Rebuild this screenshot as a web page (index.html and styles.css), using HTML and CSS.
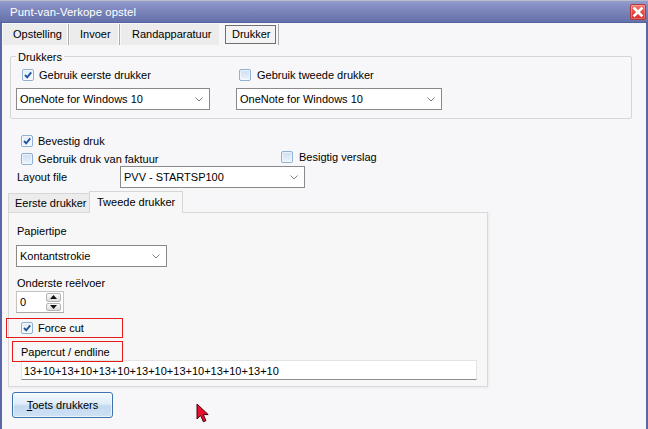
FILE: index.html
```html
<!DOCTYPE html>
<html>
<head>
<meta charset="utf-8">
<title>Punt-van-Verkope opstel</title>
<link rel="stylesheet" href="styles.css">
</head>
<body>
<div class="window">
  <div class="titlebar">
    <span class="title">Punt-van-Verkope opstel</span>
    <span class="close"><svg width="12" height="12" viewBox="0 0 12 12"><path d="M2.5 2.5 L9.5 9.5 M9.5 2.5 L2.5 9.5" stroke="#fff" stroke-width="2.6" stroke-linecap="square"/></svg></span>
  </div>
  <div class="frame">
    <div class="tabs">
      <div class="tab t1">Opstelling</div>
      <div class="tab t2">Invoer</div>
      <div class="tab t3">Randapparatuur</div>
      <div class="tab t4"><span class="focus">Drukker</span></div>
      <div class="tabsep"></div>
    </div>

    <div class="group">
      <span class="legend">Drukkers</span>
      <div class="group-cols">
        <div class="col col1">
          <div class="check c-first"><span class="box checked"><svg width="10" height="10" viewBox="0 0 10 10"><path d="M2 5 L4.2 7.4 L8.2 2.4" stroke="#23569e" stroke-width="1.9" fill="none"/></svg></span><span>Gebruik eerste drukker</span></div>
          <div class="select s-printer1"><span>OneNote for Windows 10</span><svg class="chev" width="8" height="5" viewBox="0 0 8 5"><path d="M0.5 0.5 L4 4 L7.5 0.5" stroke="#808080" fill="none"/></svg></div>
        </div>
        <div class="col col2">
          <div class="check c-second"><span class="box"></span><span>Gebruik tweede drukker</span></div>
          <div class="select s-printer2"><span>OneNote for Windows 10</span><svg class="chev" width="8" height="5" viewBox="0 0 8 5"><path d="M0.5 0.5 L4 4 L7.5 0.5" stroke="#808080" fill="none"/></svg></div>
        </div>
      </div>
    </div>

    <div class="check row-bevestig"><span class="box checked"><svg width="10" height="10" viewBox="0 0 10 10"><path d="M2 5 L4.2 7.4 L8.2 2.4" stroke="#23569e" stroke-width="1.9" fill="none"/></svg></span><span>Bevestig druk</span></div>

    <div class="row-two">
      <div class="check c-faktuur"><span class="box"></span><span>Gebruik druk van faktuur</span></div>
      <div class="check c-verslag"><span class="box"></span><span>Besigtig verslag</span></div>
    </div>

    <div class="row-layout">
      <span class="layout-label">Layout file</span>
      <div class="select s-layout"><span>PVV - STARTSP100</span><svg class="chev" width="8" height="5" viewBox="0 0 8 5"><path d="M0.5 0.5 L4 4 L7.5 0.5" stroke="#808080" fill="none"/></svg></div>
    </div>

    <div class="itabs">
      <div class="itab itab1">Eerste drukker</div>
      <div class="itab itab2">Tweede drukker</div>
    </div>
    <div class="panel">
      <div class="p-label first">Papiertipe</div>
      <div class="select s-paper"><span>Kontantstrokie</span><svg class="chev" width="8" height="5" viewBox="0 0 8 5"><path d="M0.5 0.5 L4 4 L7.5 0.5" stroke="#808080" fill="none"/></svg></div>
      <div class="p-label second">Onderste reëlvoer</div>
      <div class="spinner">
        <span class="spin-val">0</span>
        <span class="spin-btns">
          <span class="spin-btn"><svg width="7" height="4" viewBox="0 0 7 4"><path d="M0 4 L3.5 0 L7 4 Z" fill="#111"/></svg></span>
          <span class="spin-btn"><svg width="7" height="4" viewBox="0 0 7 4"><path d="M0 0 L3.5 4 L7 0 Z" fill="#111"/></svg></span>
        </span>
      </div>
      <div class="redbox red1"><div class="check"><span class="box checked"><svg width="10" height="10" viewBox="0 0 10 10"><path d="M2 5 L4.2 7.4 L8.2 2.4" stroke="#23569e" stroke-width="1.9" fill="none"/></svg></span><span>Force cut</span></div></div>
      <div class="redbox red2">Papercut / endline</div>
      <div class="input">13+10+13+10+13+10+13+10+13+10+13+10+13+10</div>
    </div>

    <div class="btn"><span><u>T</u>oets drukkers</span></div>
  </div>

  <svg class="cursor" width="15" height="20" viewBox="0 0 15 20"><path d="M1 1 L1 16 L4.6 12.6 L7.4 18.8 L10 17.6 L7.3 11.6 L12.2 11.6 Z" fill="#e8102a" stroke="#4a0010" stroke-width="1" stroke-linejoin="miter"/></svg>
</div>
</body>
</html>
```

FILE: styles.css
```css
* { box-sizing: border-box; margin: 0; padding: 0; }
body {
  margin: 0;
  font-family: "Liberation Sans", Arial, sans-serif;
  font-size: 11px;
  color: #000;
  background: #f7f7f9;
}
.window {
  width: 648px;
  height: 429px;
  overflow: hidden;
  position: relative;
  background: #f7f7f9;
}
.titlebar {
  height: 23px;
  display: flex;
  align-items: center;
  justify-content: space-between;
  padding: 0 2px 0 10px;
  border-top: 1px solid #b9bccb;
  border-bottom: 1px solid #56619f;
  background: linear-gradient(#959dcc 0%, #8790c4 20%, #7580b6 60%, #6670aa 100%);
}
.title {
  color: #fff;
  font-size: 11.3px;
  letter-spacing: 0.1px;
}
.close {
  width: 16px;
  height: 16px;
  margin-top: 1px;
  border: 1px solid #b33a3a;
  border-radius: 2px;
  background: linear-gradient(#f57b73 0%, #e84a44 50%, #d9302c 100%);
  box-shadow: inset 0 0 0 1px rgba(255,255,255,0.25);
  display: flex;
  align-items: center;
  justify-content: center;
}
.frame {
  height: 406px;
  box-shadow: inset 2px 0 0 #5b66a6, inset -2px 0 0 #5b66a6;
}

/* top tabs */
.tabs {
  display: flex;
  height: 22px;
  padding: 1px 0 0 3px;
}
.tab {
  height: 21px;
  line-height: 21px;
  background: #ececec;
  padding-left: 10px;
  white-space: nowrap;
}
.t1 { width: 65px; border-right: 1px solid #fff; box-shadow: 1px 0 0 #a9a9a9; margin-right: 2px; }
.t2 { width: 49px; border-right: 1px solid #fff; box-shadow: 1px 0 0 #a9a9a9; margin-right: 2px; }
.t3 { width: 98px; padding-left: 11px; margin-right: 6px; }
.t4 {
  width: 51px;
  height: 19px;
  margin-top: 1px;
  padding: 0;
  background: #f3f3f3;
  border: 1px solid #6f6f6f;
  line-height: 17px;
}
.t4 .focus {
  display: block;
  height: 17px;
  padding-left: 6px;
}
.tabsep {
  width: 1px;
  height: 21px;
  margin-left: 2px;
  background: #a9a9a9;
}

/* Drukkers group */
.group {
  margin: 11px 0 0 10px;
  width: 622px;
  height: 63px;
  border: 1px solid #d6d6d6;
  border-radius: 2px;
}
.legend {
  display: block;
  width: max-content;
  margin: -7px 0 0 5px;
  padding: 0 2px;
  line-height: 14px;
  background: #f7f7f9;
}
.group-cols {
  display: flex;
  gap: 26px;
  padding-left: 5px;
  margin-top: 4px;
}
.col1 { width: 194px; }
.col2 { width: 206px; }
.c-first { margin-left: 6px; }
.c-second { margin-left: 3px; }
.c-second .box { margin-right: 6px; }
.col .select { margin-top: 6px; }

/* checkbox */
.check {
  display: flex;
  align-items: center;
  height: 14px;
  white-space: nowrap;
}
.box {
  width: 12px;
  height: 12px;
  margin-right: 5px;
  flex: none;
  border: 1px solid #8fb0d3;
  border-radius: 2px;
  background: linear-gradient(#cddff2 0%, #dce9f6 50%, #eef5fc 100%);
  box-shadow: inset 0 0 0 1px rgba(255,255,255,0.55);
  display: flex;
  align-items: center;
  justify-content: center;
}
.box.checked {
  background: linear-gradient(#e4eef8 0%, #f4f8fc 100%);
}

/* select */
.select {
  height: 22px;
  border: 1px solid #8a8a8a;
  background: #fff;
  display: flex;
  align-items: center;
  justify-content: space-between;
  padding: 0 6px 0 3px;
  white-space: nowrap;
}
.chev { flex: none; }

.row-bevestig { margin: 15px 0 0 21px; }
.row-two {
  display: flex;
  margin-top: 2px;
  height: 14px;
  align-items: center;
}
.c-faktuur { width: 260px; margin-left: 21px; margin-top: 3px; }
.c-verslag { margin-top: -1px; }
.c-verslag .box { margin-right: 6px; }
.row-layout {
  display: flex;
  align-items: center;
  margin-top: 2px;
  padding-left: 17px;
}
.layout-label { width: 103px; }
.s-layout { width: 185px; }

/* inner tabs */
.itabs {
  display: flex;
  align-items: flex-end;
  margin-top: 3px;
  padding-left: 8px;
  height: 21px;
}
.itab {
  white-space: nowrap;
  border: 1px solid #d6d6d6;
  border-bottom: none;
}
.itab1 {
  width: 81px;
  height: 19px;
  line-height: 18px;
  padding-left: 6px;
  background: #ececec;
  border-right: none;
}
.itab2 {
  width: 94px;
  height: 22px;
  line-height: 20px;
  padding-left: 7px;
  margin-bottom: -1px;
  background: #f7f7f7;
  position: relative;
  z-index: 1;
}
.panel {
  margin-left: 8px;
  width: 480px;
  height: 175px;
  border: 1px solid #d9d9d9;
  background: #f7f7f7;
  box-shadow: 2px 0 0 #efeff1, 0 2px 0 #efeff1;
}
.p-label {
  line-height: 14px;
  padding-left: 8px;
}
.p-label.first { margin-top: 11px; }
.p-label.second { margin-top: 9px; }
.s-paper {
  width: 151px;
  margin: 7px 0 0 7px;
}
.spinner {
  width: 48px;
  height: 22px;
  margin: 1px 0 0 7px;
  border: 1px solid #c4c4c4;
  border-bottom-color: #a8a8a8;
  background: #fff;
  display: flex;
  align-items: center;
}
.spin-val {
  flex: 1;
  padding-left: 3px;
}
.spin-btns {
  width: 15px;
  height: 18px;
  margin-right: 2px;
  display: flex;
  flex-direction: column;
  gap: 1px;
}
.spin-btn {
  flex: 1;
  border: 1px solid #b4b4b4;
  border-radius: 2px;
  background: linear-gradient(#fbfbfb, #dcdcdc);
  display: flex;
  align-items: center;
  justify-content: center;
}
.redbox {
  border: 1px solid #e41c1c;
  display: flex;
  align-items: center;
}
.red1 {
  width: 117px;
  height: 20px;
  margin: 5px 0 0 -3px;
  padding-left: 14px;
}
.red1 .box { margin-right: 5px; }
.red2 {
  width: 111px;
  height: 21px;
  margin: 3px 0 0 3px;
  padding-left: 8px;
  position: relative;
  z-index: 1;
}
.input {
  width: 456px;
  height: 20px;
  margin: -2px 0 0 12px;
  border: 1px solid #e3e3e3;
  border-bottom-color: #8c8c8c;
  background: #fff;
  padding-left: 2px;
  padding-top: 1px;
  line-height: 18px;
  white-space: nowrap;
}

/* button */
.btn {
  width: 101px;
  height: 26px;
  margin: 5px 0 0 12px;
  border: 1px solid #3d73aa;
  border-radius: 3px;
  background: linear-gradient(#f4f9fe 0%, #dfecf8 45%, #c2d9ef 55%, #cfe2f4 100%);
  box-shadow: inset 0 0 0 1px rgba(255,255,255,0.6);
  display: flex;
  align-items: center;
  justify-content: center;
}
.btn u { text-decoration: underline; text-underline-offset: 1px; }

.cursor {
  position: absolute;
  left: 196px;
  top: 403px;
}
```
